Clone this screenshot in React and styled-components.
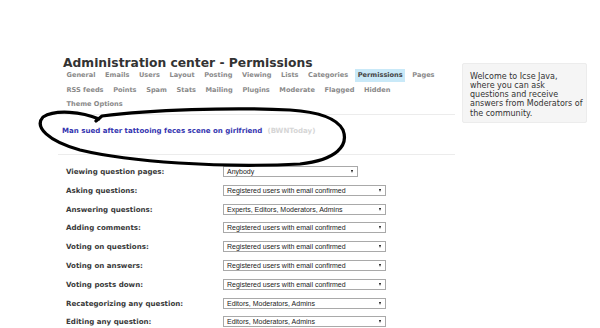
import React from "react";
import styled, { createGlobalStyle } from "styled-components";

const Global = createGlobalStyle`
  html, body { margin: 0; padding: 0; background: #fff; }
  body { font-family: Verdana, "DejaVu Sans", sans-serif; color: #333; }
  * { box-sizing: border-box; }
`;

const Page = styled.div`
  position: relative;
  width: 600px;
  height: 328px;
  overflow: hidden;
  display: flex;
  align-items: flex-start;
`;

const Main = styled.div`
  margin-left: 58px;
  width: 397px;
  padding-top: 56.5px;
`;

const Title = styled.h1`
  margin: 0 0 0 5px;
  font-size: 12.3px;
  line-height: 12px;
  font-weight: bold;
  color: #333;
  white-space: nowrap;
`;

const Nav = styled.div`
  padding-left: 6px;
  display: flex;
  flex-direction: column;
`;

const NavRow = styled.div`
  display: flex;
  height: 14.5px;
  align-items: center;
`;

const NavItem = styled.span`
  font-size: 6.6px;
  font-weight: bold;
  line-height: 13px;
  height: 13px;
  padding: 0 2.5px;
  margin-right: 4.6px;
  color: ${(p) => (p.$active ? "#444" : "#8a8a8a")};
  background: ${(p) => (p.$active ? "#c9e9f8" : "transparent")};
  white-space: nowrap;
`;

const Rule = styled.div`
  height: 1px;
  background: #ececec;
  margin: ${(p) => p.$m || "0"};
`;

const Headline = styled.div`
  padding: 11px 0 18px 4px;
  font-size: 7.05px;
  line-height: 10px;
  font-weight: bold;
  white-space: nowrap;
`;

const HeadLink = styled.a`
  color: #3535b0;
  text-decoration: none;
`;

const Source = styled.span`
  color: #d6d6d6;
  margin-left: 5px;
`;

const Form = styled.div`
  margin-top: 7.6px;
  display: flex;
  flex-direction: column;
`;

const Row = styled.div`
  height: 18.8px;
  display: grid;
  grid-template-columns: 157px auto;
  align-items: center;
  padding-left: 8px;
`;

const Label = styled.span`
  font-size: 7.1px;
  font-weight: bold;
  color: #3a3a3a;
  white-space: nowrap;
`;

const SelectBox = styled.div`
  position: relative;
  width: ${(p) => p.$w}px;
  height: 11px;
  padding-left: 3px;
  border: 1px solid #a9a9a9;
  background: #fff;
  font-family: "Liberation Sans", Arial, sans-serif;
  font-size: 7px;
  line-height: 9px;
  color: #222;
  white-space: nowrap;
`;

const Arrow = styled.span`
  position: absolute;
  right: 4px;
  top: 3px;
  width: 0;
  height: 0;
  border-left: 1.8px solid transparent;
  border-right: 1.8px solid transparent;
  border-top: 3.5px solid #111;
`;

const Sidebar = styled.div`
  margin-left: 7px;
  margin-top: 63px;
  width: 125px;
  height: 60px;
  padding: 7.8px 3px 0 7px;
  background: #f5f5f5;
  border: 1px solid #ececec;
  border-radius: 2px;
  font-size: 8px;
  line-height: 9.2px;
  color: #333;
`;

const Scribble = styled.svg`
  position: absolute;
  left: 0;
  top: 0;
  pointer-events: none;
`;

const navRows = [
  ["General", "Emails", "Users", "Layout", "Posting", "Viewing", "Lists", "Categories", "Permissions", "Pages"],
  ["RSS feeds", "Points", "Spam", "Stats", "Mailing", "Plugins", "Moderate", "Flagged", "Hidden"],
  ["Theme Options"],
];

const REG = "Registered users with email confirmed";
const EDIT = "Editors, Moderators, Admins";

const perms = [
  ["Viewing question pages:", "Anybody", 135],
  ["Asking questions:", REG, 163],
  ["Answering questions:", "Experts, Editors, Moderators, Admins", 163],
  ["Adding comments:", REG, 163],
  ["Voting on questions:", REG, 163],
  ["Voting on answers:", REG, 163],
  ["Voting posts down:", REG, 163],
  ["Recategorizing any question:", EDIT, 163],
  ["Editing any question:", EDIT, 163],
];

export default function App() {
  return (
    <>
      <Global />
      <Page>
        <Main>
          <Title>Administration center - Permissions</Title>
          <Nav>
            {navRows.map((row, i) => (
              <NavRow key={i}>
                {row.map((n) => (
                  <NavItem key={n} $active={n === "Permissions"}>
                    {n}
                  </NavItem>
                ))}
              </NavRow>
            ))}
          </Nav>
          <Rule $m="1.5px 0 0 0" />
          <Headline>
            <HeadLink href="#">Man sued after tattooing feces scene on girlfriend</HeadLink>
            <Source>(BWNToday)</Source>
          </Headline>
          <Rule />
          <Form>
            {perms.map(([label, value, w]) => (
              <Row key={label}>
                <Label>{label}</Label>
                <SelectBox $w={w} role="combobox">
                  {value}
                  <Arrow />
                </SelectBox>
              </Row>
            ))}
          </Form>
        </Main>
        <Sidebar>
          Welcome to Icse Java, where you can ask questions and receive answers from Moderators of the community.
        </Sidebar>
        <Scribble width="600" height="328" viewBox="0 0 600 328">
          <path
            d="M 99 119 C 82 112, 56 109, 43 117 C 34 127, 48 141, 80 150 C 130 162, 220 168, 300 164 C 336 160, 349 146, 343 130 C 337 118, 320 112, 290 110 C 230 107, 150 110, 102 116 L 96 121"
            fill="none"
            stroke="#000"
            strokeWidth="3.2"
            strokeLinecap="round"
            strokeLinejoin="round"
          />
        </Scribble>
      </Page>
    </>
  );
}
